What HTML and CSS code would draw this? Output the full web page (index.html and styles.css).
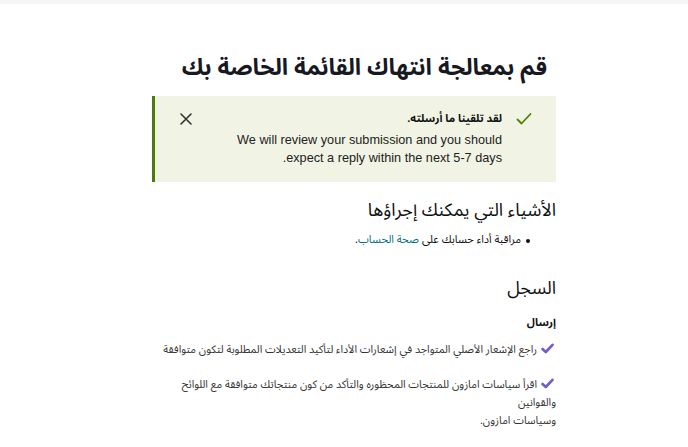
FILE: index.html
```html
<!DOCTYPE html>
<html lang="ar" dir="rtl">
<head>
<meta charset="utf-8">
<link rel="stylesheet" href="styles.css">
</head>
<body>
<div class="topbar"></div>
<main class="page">
  <h1 class="title">قم بمعالجة انتهاك القائمة الخاصة بك</h1>
  <div class="alert">
    <svg class="alert-check" width="16" height="14" viewBox="0 0 16 14"><path d="M1.5 7.5 L5.5 11.5 L14.5 2" fill="none" stroke="#538000" stroke-width="1.8" stroke-linecap="round" stroke-linejoin="round"/></svg>
    <div class="alert-body">
      <div class="alert-title">لقد تلقينا ما أرسلته.</div>
      <div class="alert-text" dir="rtl">We will review your submission and you should<br>expect a reply within the next 5-7 days.</div>
    </div>
    <svg class="alert-close" width="12" height="12" viewBox="0 0 12 12"><path d="M1 1 L11 11 M11 1 L1 11" stroke="#333" stroke-width="1.6" stroke-linecap="round"/></svg>
  </div>
  <h2 class="section-title">الأشياء التي يمكنك إجراؤها</h2>
  <ul class="bullets">
    <li>مراقبة أداء حسابك على <a href="#" class="link">صحة الحساب</a>.</li>
  </ul>
  <h2 class="section-title history">السجل</h2>
  <div class="sub-title">إرسال</div>
  <ul class="checks">
    <li><svg class="pcheck" width="13" height="11" viewBox="0 0 13 11"><path d="M1.5 6 L4.8 9 L11.5 1.8" fill="none" stroke="#6b5fc9" stroke-width="2.6" stroke-linecap="round" stroke-linejoin="round"/></svg><span>راجع الإشعار الأصلي المتواجد في إشعارات الأداء لتأكيد التعديلات المطلوبة لتكون متوافقة</span></li>
    <li><svg class="pcheck" width="13" height="11" viewBox="0 0 13 11"><path d="M1.5 6 L4.8 9 L11.5 1.8" fill="none" stroke="#6b5fc9" stroke-width="2.6" stroke-linecap="round" stroke-linejoin="round"/></svg><span>اقرأ سياسات امازون للمنتجات المحظوره والتأكد من كون منتجاتك متوافقة مع اللوائح<br>والقوانين<br>وسياسات امازون.</span></li>
  </ul>
</main>
</body>
</html>
```
FILE: styles.css
```css
html, body {
  margin: 0;
  padding: 0;
  background: #fff;
}
body {
  font-family: "Noto Sans Arabic", "Noto Naskh Arabic", "DejaVu Sans", sans-serif;
  color: #0f1111;
}
.topbar {
  height: 4px;
  background: #f6f6f6;
}
.page {
  width: 404px;
  margin-right: 132px;
  padding-top: 48px;
}
.title {
  margin: 0 9px 0 0;
  font-size: 23px;
  line-height: 32px;
  font-weight: 700;
  color: #16191f;
  white-space: nowrap;
}
.alert {
  margin-top: 12px;
  height: 86px;
  box-sizing: border-box;
  background: #f1f4e4;
  border-left: 3px solid #4c7a0c;
  display: flex;
  align-items: flex-start;
  padding: 15px 24px 0 0;
}
.alert-check {
  flex: none;
  margin-top: 1px;
  margin-left: 14px;
}
.alert-body {
  flex: 1;
}
.alert-title {
  font-size: 11px;
  font-weight: 700;
  line-height: 16px;
}
.alert-text {
  font-family: "Liberation Sans", "DejaVu Sans", sans-serif;
  font-size: 12.7px;
  line-height: 18px;
  margin-top: 4px;
  color: #222;
}
.alert-close {
  flex: none;
  margin-top: 2px;
  margin-left: 25px;
}
.section-title {
  margin: 16px 0 0 0;
  font-size: 18px;
  font-weight: 400;
  line-height: 24px;
  color: #0f1111;
}
.bullets {
  list-style: none;
  margin: 10px 0 0 0;
  padding: 0 35px 0 0;
  font-size: 11px;
  line-height: 16px;
}
.bullets li {
  position: relative;
}
.bullets li::before {
  content: "";
  position: absolute;
  right: -9px;
  top: 7px;
  width: 4px;
  height: 4px;
  border-radius: 50%;
  background: #0f1111;
}
.link {
  color: #007185;
  text-decoration: none;
}
.history {
  margin-top: 28px;
}
.sub-title {
  margin-top: 15px;
  font-size: 11px;
  font-weight: 700;
  line-height: 16px;
}
.checks {
  list-style: none;
  margin: 10px 0 0 0;
  padding: 0;
  font-size: 10.8px;
  line-height: 18px;
  color: #333;
}
.checks li {
  margin-bottom: 17px;
}
.pcheck {
  margin-left: 4px;
  margin-right: 2px;
  vertical-align: -1px;
}
```
